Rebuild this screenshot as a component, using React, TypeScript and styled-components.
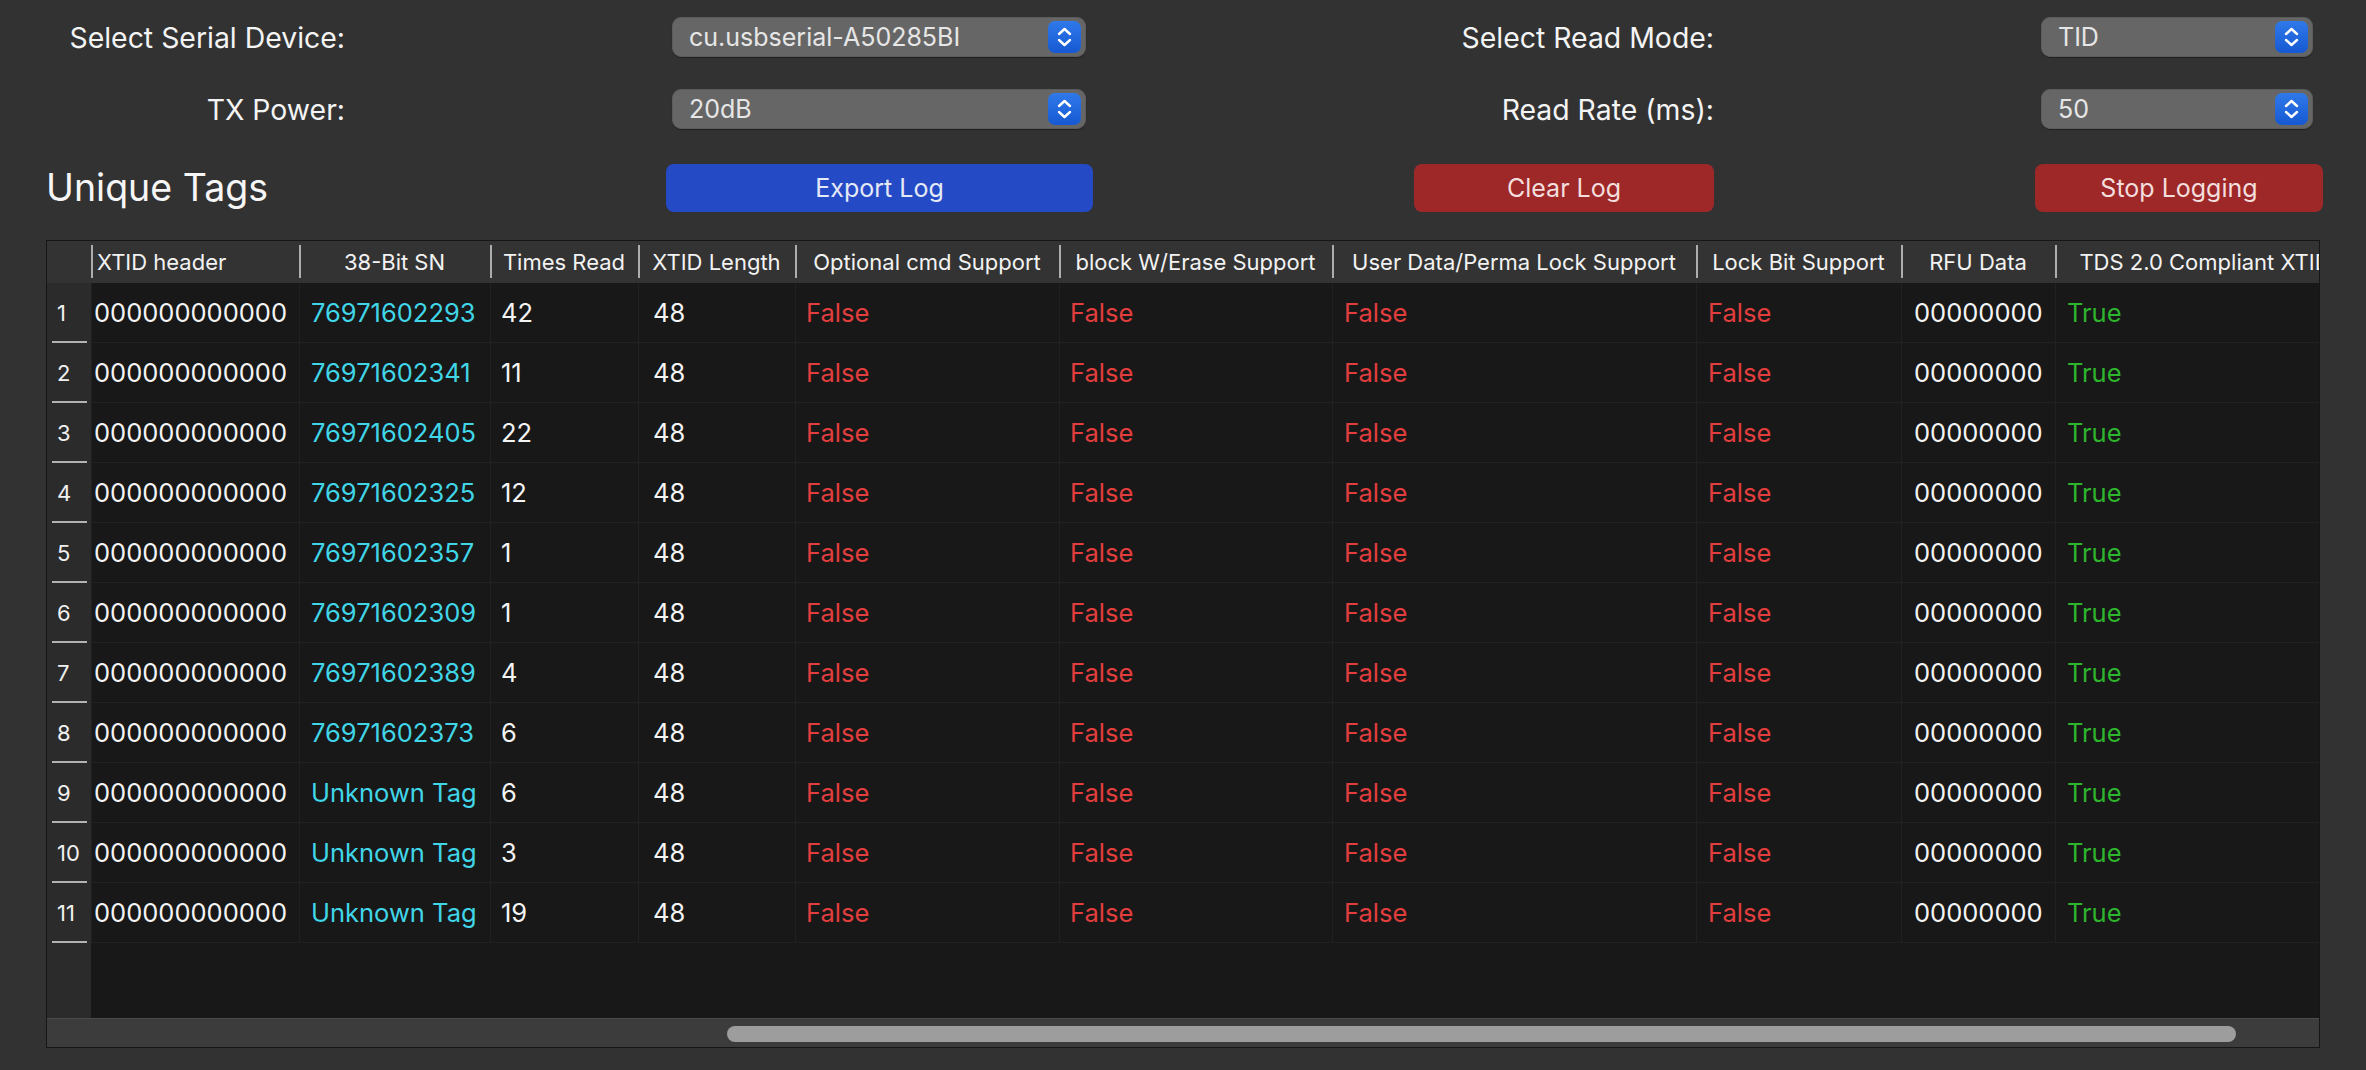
import React from "react";
import styled, { createGlobalStyle } from "styled-components";

const GlobalStyle = createGlobalStyle`
  html, body {
    margin: 0;
    padding: 0;
    background: #323232;
  }
  body {
    font-family: Inter, "Noto Sans", sans-serif;
    color: #f4f4f4;
  }
`;

const COLS = "44px 208px 191px 148px 157px 264px 273px 364px 205px 154px 300px";

const Window = styled.div`
  width: 2366px;
  height: 1070px;
  padding-top: 17px;
  box-sizing: border-box;
  overflow: hidden;
`;

const Controls = styled.div`
  display: grid;
  grid-template-columns: 345px 427px 300px 288px;
  grid-template-rows: 40px 40px 51px;
  column-gap: 321px;
  row-gap: 32px;
`;

const Label = styled.div`
  justify-self: end;
  align-self: center;
  font-size: 28.4px;
  color: #f4f4f4;
  white-space: nowrap;
`;

const Title = styled.div`
  justify-self: start;
  align-self: end;
  padding-left: 46px;
  line-height: 48px;
  font-size: 37.5px;
  color: #f6f6f6;
  white-space: nowrap;
`;

const SelectBox = styled.div<{ $w: number }>`
  width: ${(p) => p.$w}px;
  height: 40px;
  margin-left: 6px;
  box-sizing: border-box;
  display: flex;
  align-items: center;
  justify-content: space-between;
  padding: 0 4px 0 16px;
  border-radius: 9px;
  background: #666666;
  border: 1px solid #5c5c5c;
  box-shadow: 0 1px 1px rgba(0, 0, 0, 0.35);
  font-size: 25px;
  color: #e6e6e6;
`;

const Stepper = styled.div`
  width: 33px;
  height: 32px;
  border-radius: 7px;
  background: linear-gradient(#2f79ea, #1659d2);
  display: flex;
  align-items: center;
  justify-content: center;
`;

const Button = styled.div<{ $tone: "blue" | "red" }>`
  align-self: end;
  height: 48px;
  border-radius: 8px;
  display: flex;
  align-items: center;
  justify-content: center;
  font-size: 25px;
  background: ${(p) => (p.$tone === "blue" ? "#244bc5" : "#9e2828")};
  color: ${(p) => (p.$tone === "blue" ? "#e4e9f7" : "#f3dede")};
`;

const Table = styled.div`
  margin: 28px 46px 0;
  height: 808px;
  box-sizing: border-box;
  border: 1px solid #161616;
  background: #181818;
  display: flex;
  flex-direction: column;
  overflow: hidden;
`;

const Viewport = styled.div`
  flex: 1;
  display: flex;
  flex-direction: column;
  overflow: hidden;
`;

const HeaderRow = styled.div`
  display: grid;
  grid-template-columns: ${COLS};
  height: 42px;
  flex: none;
  background: #333333;
`;

const HeaderCell = styled.div<{ $left?: boolean }>`
  position: relative;
  display: flex;
  align-items: center;
  justify-content: ${(p) => (p.$left ? "flex-start" : "center")};
  padding-left: ${(p) => (p.$left ? "6px" : "0")};
  font-size: 22px;
  color: #f2f2f2;
  white-space: nowrap;
  overflow: hidden;

  &::before {
    content: "";
    position: absolute;
    left: 0;
    top: 4px;
    bottom: 5px;
    width: 2px;
    background: #adadad;
  }
`;

const Corner = styled.div`
  background: #333333;
`;

const Row = styled.div`
  display: grid;
  grid-template-columns: ${COLS};
  height: 60px;
  flex: none;
`;

const RowNum = styled.div`
  position: relative;
  display: flex;
  align-items: center;
  padding-left: 10px;
  background: #2b2b2b;
  font-size: 22px;
  color: #f0f0f0;

  &::after {
    content: "";
    position: absolute;
    left: 5px;
    right: 4px;
    bottom: 0;
    height: 2px;
    background: #b2b2b2;
  }
`;

const toneColor = {
  plain: "#f4f4f4",
  sn: "#40d6e8",
  no: "#e23e3e",
  yes: "#2eb52e",
};

type Tone = keyof typeof toneColor;

const Cell = styled.div<{ $tone: Tone; $pad: number }>`
  display: flex;
  align-items: center;
  padding-left: ${(p) => p.$pad}px;
  border-left: 1px solid #212121;
  border-bottom: 1px solid #212121;
  font-size: 25.5px;
  color: ${(p) => toneColor[p.$tone]};
  white-space: nowrap;
  overflow: hidden;
`;

const Filler = styled.div`
  flex: 1;
  display: grid;
  grid-template-columns: ${COLS};
`;

const FillerNum = styled.div`
  background: #2b2b2b;
`;

const Track = styled.div`
  flex: none;
  height: 29px;
  box-sizing: border-box;
  padding-top: 7px;
  background: #3c3c3c;
  border-top: 1px solid #4a4a4a;
`;

const Thumb = styled.div<{ $offset: number; $w: number }>`
  margin-left: ${(p) => p.$offset}px;
  width: ${(p) => p.$w}px;
  height: 16px;
  border-radius: 8px;
  background: #9d9d9d;
`;

const Chevrons = () => (
  <svg width="33" height="32" viewBox="0 0 33 32">
    <polyline points="11,13 16.5,8 22,13" fill="none" stroke="#fff" strokeWidth="2.4" strokeLinecap="round" strokeLinejoin="round" />
    <polyline points="11,19 16.5,24 22,19" fill="none" stroke="#fff" strokeWidth="2.4" strokeLinecap="round" strokeLinejoin="round" />
  </svg>
);

function Select({ value, width }: { value: string; width: number }) {
  return (
    <SelectBox $w={width}>
      <span>{value}</span>
      <Stepper>
        <Chevrons />
      </Stepper>
    </SelectBox>
  );
}

const headers = [
  "XTID header",
  "38-Bit SN",
  "Times Read",
  "XTID Length",
  "Optional cmd Support",
  "block W/Erase Support",
  "User Data/Perma Lock Support",
  "Lock Bit Support",
  "RFU Data",
  "TDS 2.0 Compliant XTID",
];

const tags: [string, string][] = [
  ["76971602293", "42"],
  ["76971602341", "11"],
  ["76971602405", "22"],
  ["76971602325", "12"],
  ["76971602357", "1"],
  ["76971602309", "1"],
  ["76971602389", "4"],
  ["76971602373", "6"],
  ["Unknown Tag", "6"],
  ["Unknown Tag", "3"],
  ["Unknown Tag", "19"],
];

const pads = [2, 11, 10, 14, 10, 10, 11, 11, 12, 11];

export default function App() {
  return (
    <>
      <GlobalStyle />
      <Window>
        <Controls>
          <Label>Select Serial Device:</Label>
          <Select value="cu.usbserial-A50285BI" width={414} />
          <Label>Select Read Mode:</Label>
          <Select value="TID" width={272} />

          <Label>TX Power:</Label>
          <Select value="20dB" width={414} />
          <Label>Read Rate (ms):</Label>
          <Select value="50" width={272} />

          <Title>Unique Tags</Title>
          <Button $tone="blue">Export Log</Button>
          <Button $tone="red">Clear Log</Button>
          <Button $tone="red">Stop Logging</Button>
        </Controls>

        <Table>
          <Viewport>
            <HeaderRow>
              <Corner />
              {headers.map((h, i) => (
                <HeaderCell key={h} $left={i === 0}>
                  {h}
                </HeaderCell>
              ))}
            </HeaderRow>
            {tags.map(([sn, times], i) => {
              const values: [string, Tone][] = [
                ["000000000000", "plain"],
                [sn, "sn"],
                [times, "plain"],
                ["48", "plain"],
                ["False", "no"],
                ["False", "no"],
                ["False", "no"],
                ["False", "no"],
                ["00000000", "plain"],
                ["True", "yes"],
              ];
              return (
                <Row key={i}>
                  <RowNum>{i + 1}</RowNum>
                  {values.map(([v, tone], j) => (
                    <Cell key={j} $tone={tone} $pad={pads[j]}>
                      {v}
                    </Cell>
                  ))}
                </Row>
              );
            })}
            <Filler>
              <FillerNum />
            </Filler>
          </Viewport>
          <Track>
            <Thumb $offset={680} $w={1509} />
          </Track>
        </Table>
      </Window>
    </>
  );
}
